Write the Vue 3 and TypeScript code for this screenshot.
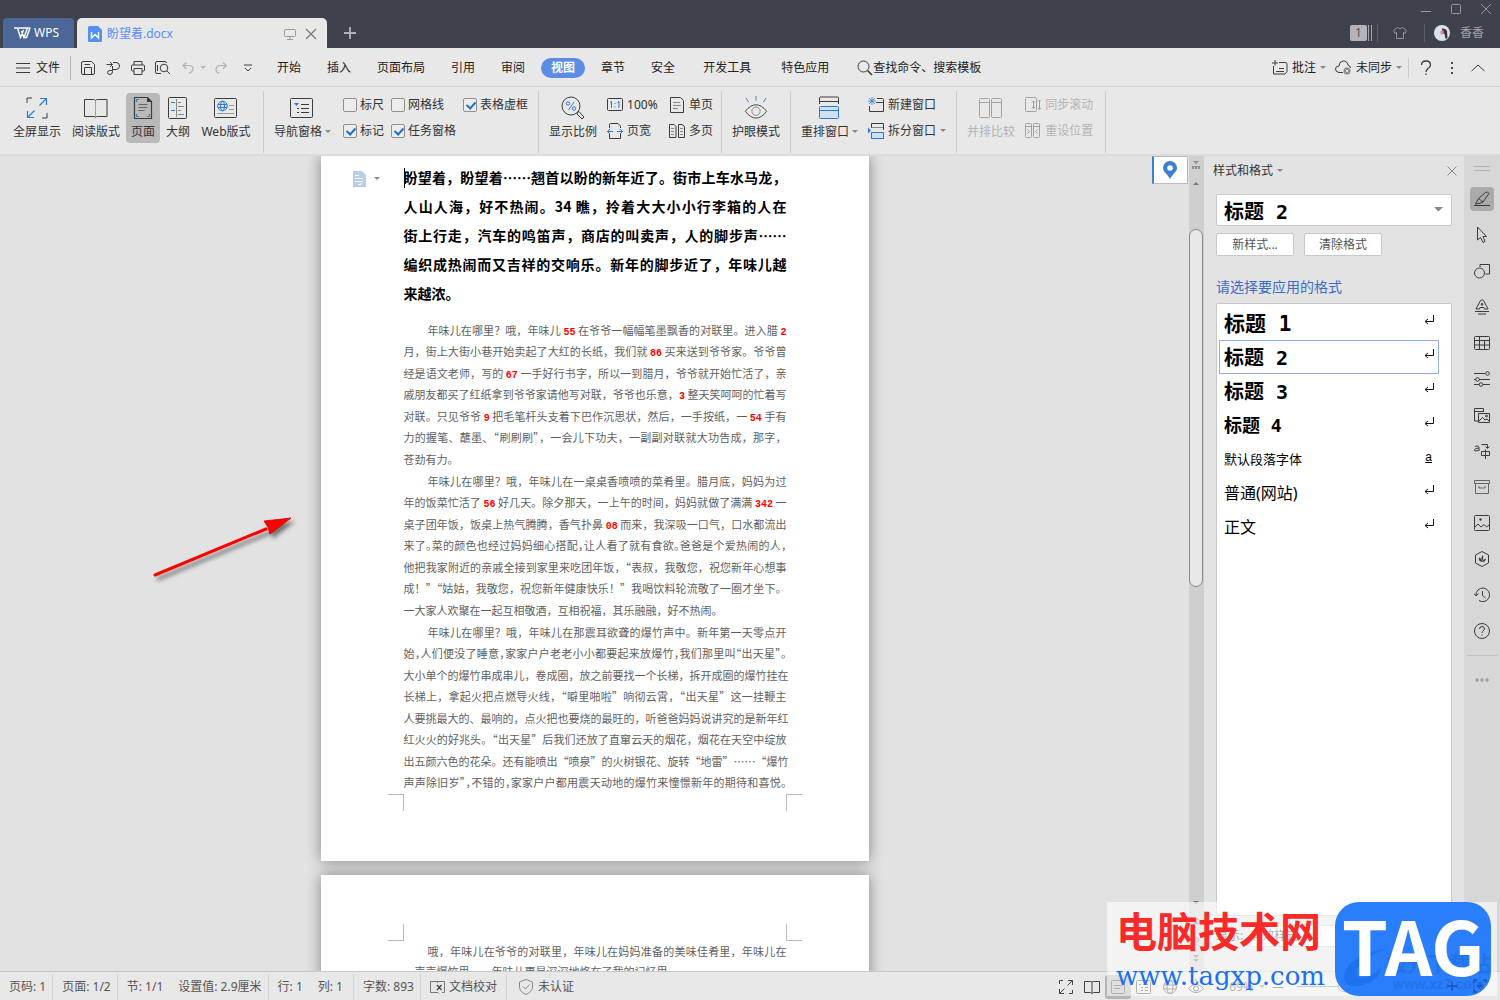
<script setup lang="ts">
import { h, ref } from 'vue'

type Glyph = { w: number; h: number; d: string }

const K = '#3c3c3c'
const B = '#2a7bd0'
const G = '#a2a2a2'
const box = (x: number, y: number, w: number, hh: number, c = K, r = 1) =>
  `<rect x="${x}" y="${y}" width="${w}" height="${hh}" rx="${r}" stroke="${c}"/>`
const p = (d: string, c = K, extra = '') => `<path d="${d}" stroke="${c}" ${extra}/>`

const glyphs: Record<string, Glyph> = {
  logo: { w: 17, h: 12, d: p('M0 1H3.500L6.500 10.500 9.500 3M4.500 1H13.500L10 10.500 7.500 4M16.500 1H13.500M16 1L12.500 10.500H10', '#fff', 'stroke-width="1.500"') },
  doc: { w: 14, h: 16, d: '<path d="M1.500 0H10L14 4V14.500Q14 16 12.500 16H1.500Q0 16 0 14.500V1.500Q0 0 1.500 0Z" fill="#568ff3"/>' + p('M3.500 6V12L7 8.500 10.500 12V6', '#fff', 'stroke-width="1.4"') },
  screen: { w: 12, h: 12, d: box(0.5, 1.5, 11, 7, '#999') + p('M6 8.500V11.500M3 11.500H9', '#999') },
  close: { w: 12, h: 12, d: p('M1 1L11 11M11 1L1 11', '#777', 'stroke-width="1.2"') },
  plus: { w: 14, h: 14, d: p('M7 1V13M1 7H13', '#b0b1b7', 'stroke-width="1.8"') },
  min: { w: 12, h: 12, d: p('M1 8.500H11', '#9899a0') },
  max: { w: 12, h: 12, d: box(1.5, 1.5, 9, 9, '#9899a0') },
  shut: { w: 12, h: 12, d: p('M1 1L11 11M11 1L1 11', '#9899a0') },
  bars: { w: 4, h: 16, d: p('M.5 0V16M3.500 0V16', '#a5a6ad') },
  shirt: { w: 14, h: 14, d: p('M4.500 1.500Q7 4 9.500 1.500L13.500 4.500 12 7.500 10.500 6.500V12.500H3.500V6.500L2 7.500.5 4.500Z', '#9394a0') },
  face: { w: 16, h: 16, d: '<circle cx="8" cy="8" r="8" fill="#dbe3ea"/><path d="M8 3.500Q12 3 13 6L13.500 13 11.500 14 10.500 9 8 7.500Z" fill="#3a2f37"/><path d="M6 6.500L9.500 5 10 8.500 7.500 10Z" fill="#c78f8e"/>' },
  menu: { w: 14, h: 12, d: p('M0 1.500H14M0 6H14M0 10.500H14') },
  save: { w: 14, h: 14, d: p('M.5 2Q.5.5 2 .5H10.500L13.500 3.500V12Q13.500 13.500 12 13.500H2Q.5 13.500.5 12ZM3.500 13V6.500H10.500V13M3.500 3.500H9') },
  reload: { w: 14, h: 14, d: p('M.5 3.500H6M4 1L6.500 3.500 4 6M7 1.500H10Q13.500 1.500 13.500 5T10 8.500H6.500M6.500 5V10.500Q6.500 13.500 4 13.500T1.500 11.500 4 9.500H6') },
  print: { w: 14, h: 14, d: p('M3 4V.5H11V4M3 10H1.500Q.5 10 .5 9V5Q.5 4 1.500 4H12.500Q13.500 4 13.500 5V9Q13.500 10 12.500 10H11M3 7.500H11V13.500H3Z') },
  preview: { w: 16, h: 14, d: p('M6 12.500H2Q.5 12.500.5 11V2Q.5.5 2 .5H10Q11.500.5 11.500 2M12 10L15 13M2.500 4V10') + '<circle cx="9" cy="7" r="3.8" stroke="#3c3c3c"/>' },
  undo: { w: 12, h: 12, d: p('M1 3.500H7.500Q11.500 4 11 7T7 11.500M4.500.5L1 3.500 4.500 7', '#b0b0b0', 'stroke-width="1.2"') },
  redo: { w: 12, h: 12, d: p('M11 3.500H5Q1 4 1 7.500T4.500 11M8 .5L11.500 3.500 8 7', '#b0b0b0', 'stroke-width="1.2"') },
  more: { w: 8, h: 8, d: p('M0 1H8M1 4L4 7 7 4') },
  caret: { w: 6, h: 4, d: '<path d="M0 0H6L3 3Z" fill="#888"/>' },
  find: { w: 16, h: 16, d: '<circle cx="6.500" cy="6.500" r="5.500" stroke="#3c3c3c"/>' + p('M10.500 10.500L15 15', K, 'stroke-width="1.6"') },
  note: { w: 16, h: 15, d: p('M7 2.500H13Q15 2.500 15 4V11.500L13 14H1.500V6M3 0V5.500M0 3H6M4 11.500H12M7 8.500H12') },
  cloud: { w: 17, h: 15, d: p('M8 12.500H4Q.5 12 .5 9T4 6Q4 1.500 8 1 12 .5 13 5 15.500 6 15.500 8') + '<circle cx="12" cy="11" r="3.5" fill="#888"/><path d="M10.500 9.500L13.500 12.500M13.500 9.500L10.500 12.500" stroke="#fff" stroke-width=".8"/>' },
  help: { w: 12, h: 16, d: p('M1.500 5Q1.500 1 6 1T10.500 5Q10.500 7 8 8.500 6 10 6 12M6 13.500V15', K, 'stroke-width="1.3"') },
  dots: { w: 4, h: 14, d: '<path d="M1 1h2v2H1zM1 6h2v2H1zM1 11h2v2H1z" fill="#444"/>' },
  up: { w: 14, h: 8, d: p('M.5 7L7 1 13.500 7') },
  full: { w: 22, h: 22, d: p('M1 6V1H6M16 21H21V16', K) + p('M14 1.500H20.500V8M20.500 1.500L13.500 8.500M1.500 14V20.500H8M1.500 20.500L8.500 13.500', B, 'stroke-width="1.2"') },
  read: { w: 24, h: 22, d: p('M11.500 3.500Q11 2.500 9.500 2.500H.5V19.500H10Q11.500 19.500 11.500 20.500 12 19.500 13.500 19.500H23V2.500H13.500Q12 2.500 11.500 3.500') + p('M11.500 4V19', G) },
  page: { w: 20, h: 22, d: p('M1.500.5H14.500L18.500 4.500V21.500H1.500Z', K, 'stroke-width="1.2"') + '<path d="M14 0V5H19Z" fill="#3c3c3c"/>' + p('M5.500 7.500H14.500M5.500 10.500H14.500M5.500 13.500H11.500', '#666') + p('M3.500 5V2.500H6M3.500 17V19.500H6M16.500 17V19.500H14', B) },
  outline: { w: 20, h: 22, d: box(0.5, 0.5, 18, 21) + p('M3 5.500H7M3 13.500H7', B) + p('M8.500 2V20M10 5.500H13M10 9.500H16M10 13.500H13M10 17.500H16', '#888') },
  web: { w: 24, h: 22, d: box(0.5, 1.5, 22, 19) + p('M15 8.500H20M15 12.500H20M3 16.500H20', '#999') + `<circle cx="8.500" cy="9" r="4.800" stroke="${B}"/><ellipse cx="8.500" cy="9" rx="2" ry="4.800" stroke="${B}"/>` + p('M4 7.500H13M4 10.500H13', B) },
  nav: { w: 26, h: 22, d: box(0.5, 1.5, 22, 19) + p('M11 7.500H19M7 11.500H9M11 11.500H19M7 15.500H9M11 15.500H19') + `<path d="M4 6H9L6.500 9Z" fill="${B}"/>` },
  zoom: { w: 24, h: 24, d: '<circle cx="10" cy="10" r="9" stroke="#3c3c3c"/>' + p('M16.500 16.500L18 15.500 23 21 21 23 16 18Z') + p('M13 6L7.500 14', B) + `<circle cx="7" cy="7.500" r="1.700" stroke="${B}"/><circle cx="13" cy="12.500" r="1.700" stroke="${B}"/>` },
  one: { w: 16, h: 14, d: box(0.5, 0.5, 15, 12) + p('M3 4.500L4.500 3.500V10M10.500 4.500L12 3.500V10M8 5V6M8 8.500V9.500', B) },
  wide: { w: 16, h: 16, d: p('M2.500 5V1.500Q2.500.5 3.500.5H11L13.500 3V5M2.500 11V15.500H13.500V11') + p('M6 8.500H0M10 8.500H16M3 6L.5 8.500 3 11M13 6L15.500 8.500 13 11', B) },
  single: { w: 14, h: 16, d: p('M.5.5H10.500L13.500 3.500V15.500H.5Z') + p('M3 5.500H10M3 8.500H11M3 11.500H8', '#888') },
  multi: { w: 16, h: 16, d: p('M.5 1.500H5L7 3.500V14.500H.5ZM9.500 1.500H13L15.500 3.500V14.500H9.500Z') + p('M2 5.500H5M2 8.500H5M2 11.500H5M11 5.500H14M11 8.500H14M11 11.500H14', '#888') },
  eye: { w: 26, h: 26, d: p('M1.500 16.500Q7 9.500 13 9.500T24.500 16.500Q19 24 13 24T1.500 16.500Z') + `<circle cx="13" cy="16.500" r="4.500" stroke="#888"/>` + p('M13 0V5M2 2L5 6.500M24 2L21 6.500', B) },
  arrange: { w: 24, h: 24, d: p('M1.500 8V2Q1.500 1 2.500 1H19.500Q20.500 1 20.500 2V8M1.500 5.500H20.500') + `<rect x="1.500" y="10.500" width="19" height="12" rx="1" stroke="${B}" fill="#cfe0f1"/>` + p('M1 14.500H21', B) },
  fresh: { w: 16, h: 16, d: p('M9 1.500H14.500Q15.500 1.500 15.500 2.500V14.500H1.500V9M8 5.500H15') + p('M4 0V8M0 4H8M1 1L7 7M7 1L1 7', B, 'stroke-width=".8"') },
  split: { w: 16, h: 16, d: p('M3.500 5V.5H15.500V7') + p('M3.500 4.500H15', '#888') + `<rect x="3.500" y="9.500" width="12" height="6" stroke="${B}" fill="#cfe0f1"/><path d="M0 4.500V10.500L3 7.500Z" fill="${B}"/>` },
  side: { w: 24, h: 22, d: box(0.5, 1.5, 10, 19, G) + box(12.5, 1.5, 10, 19, G) + p('M0 5.500H11M12 5.500H23', G) },
  sync: { w: 16, h: 16, d: box(0.5, 0.5, 11, 14, G) + p('M8.500 4V11.500M7 5.500L8.500 4 10 5.500M7 10L8.500 11.500 10 10M14.500 3V12.500M13 4.500L14.500 3 16 4.500M13 11L14.500 12.500 16 11', G) },
  reset: { w: 16, h: 16, d: box(0.5, 0.5, 6, 14, G) + box(8.5, 0.5, 6, 14, G) + p('M1 3.500H6M9 3.500H14M2.500 6.500L4.500 8.500 2.500 10.500M12.500 6.500L10.500 8.500 12.500 10.500', G) },
  para: { w: 14, h: 16, d: '<path d="M0 0H9L13 4V16H0Z" fill="#b9cce8"/>' + p('M2 4.500H6M2 7.500H10M2 10.500H10M5 13.500H8V12', '#fff') },
  pin: { w: 14, h: 18, d: '<path d="M7 0A7 7 0 0 1 14 7C14 11 9 13.500 7 18 5 13.500 0 11 0 7A7 7 0 0 1 7 0Z" fill="#3f80d4"/><circle cx="7" cy="7" r="2.800" fill="#fff"/>' },
  ruler: { w: 10, h: 10, d: '<path d="M2 1H8L5 4ZM1 6H9V9H7V7H6V9H4V7H3V9H1Z" fill="#909090"/>' },
  upTri: { w: 6, h: 4, d: '<path d="M0 3H6L3 0Z" fill="#777"/>' },
  downTri: { w: 6, h: 4, d: '<path d="M0 0H6L3 3Z" fill="#777"/>' },
  prevPg: { w: 6, h: 8, d: '<path d="M0 3H6L3 0ZM0 7H6L3 4Z" fill="#777"/>' },
  nextPg: { w: 6, h: 8, d: '<path d="M0 0H6L3 3ZM0 4H6L3 7Z" fill="#777"/>' },
  spot: { w: 6, h: 6, d: '<circle cx="3" cy="3" r="2.500" stroke="#777"/>' },
  enter: { w: 10, h: 10, d: p('M9.500 0V6.500H1.500M4 4L1 6.500 4 9', '#111') },
  shutPanel: { w: 10, h: 10, d: p('M.5.5L9.500 9.500M9.500.5L.5 9.500', '#888') },
  grip: { w: 16, h: 6, d: p('M0 .5H16M0 4.500H16', '#b0b0b0') },
  pen: { w: 16, h: 16, d: p('M0 14.500H16M1.500 13L4.500 7.500 11.500 1.500Q14 0 15 2.500L9 11Q5 13 1.500 13ZM4.500 7.500L9 11', K) },
  cursor: { w: 16, h: 18, d: p('M3.500 1V14L6.500 11.500 9 16.500 11 15.500 9 10.500H12.500Z') },
  shapes: { w: 16, h: 16, d: '<circle cx="5.500" cy="10" r="5" stroke="#3c3c3c"/>' + p('M6 4V1.500H15.500V11H11.500') },
  art: { w: 16, h: 16, d: p('M2 10L6.500 1.500Q8 0 9.500 1.500L14 10H10.500L10 8.500H6L5.500 10ZM7 6H9L8 4ZM1 12.500H15M4 15H12') },
  table: { w: 16, h: 14, d: box(0.5, 0.5, 15, 13) + p('M0 4.500H16M0 9H16M5.500 0V14M10.500 4V14') },
  sliders: { w: 16, h: 16, d: p('M0 2.500H11M0 8.500H2M5 8.500H16M0 13.500H5M9 13.500H16') + '<circle cx="13.500" cy="2.500" r="1.800" stroke="#3c3c3c"/><circle cx="3.500" cy="8.500" r="1.800" stroke="#3c3c3c"/><circle cx="7" cy="13.500" r="1.800" stroke="#3c3c3c"/>' },
  gallery: { w: 16, h: 16, d: p('M4 14H.5V1.500H9.500V5M.5 4.500H9M4.500 6.500H15.500V15.500H4.500ZM5 14L8.500 10.500 11 13 13 12 15 14') + '<circle cx="12.500" cy="9" r="1" stroke="#3c3c3c"/>' },
  translate: { w: 16, h: 16, d: p('M1 4Q1 3 3 3T5 4.500V8M5 5Q.5 5 .5 7T5 7M7.500 1.500H13.500V5M11.500 3.500L13.500 5.500 15.500 3.500M7.500 8.500H15.500V12.500H7.500ZM11.500 6.500V16') },
  archive: { w: 16, h: 14, d: p('M.5.5H15.500V3.500H.5ZM1.500 3.500V13.500H14.500V3.500M5 6V8H11V6', '#666') },
  image: { w: 16, h: 16, d: box(0.5, 0.5, 15, 15) + p('M1 12L4 9 7 12 10 9.500 12.500 12 15 10') + '<circle cx="6.500" cy="4.500" r="1.200" fill="#3c3c3c"/>' },
  leaf: { w: 16, h: 16, d: p('M8 .5L14.500 4V12L8 15.500 1.500 12V4Z') + '<path d="M8 11Q4 10 5 6.500 8 8 8 11Q6.500 6 9 4 10 7 8 11Q9 8 12 7.500 11.500 11 8 11Z" fill="#3c3c3c"/>' },
  history: { w: 16, h: 16, d: p('M2 8.500A6.800 6.800 0 1 1 5 13.500M0 6.500L2 9 4.500 6.500M8.500 4V8.500L11.500 11') },
  about: { w: 16, h: 16, d: '<circle cx="8" cy="8" r="7.500" stroke="#3c3c3c"/>' + p('M5.500 6Q5.500 3.500 8 3.500T10.500 6Q10.500 7 9 8 8.500 8 8 10M8 11.500V12.500') },
  ellipsis: { w: 14, h: 4, d: '<circle cx="2" cy="2" r="1.200" stroke="#888"/><circle cx="7" cy="2" r="1.200" stroke="#888"/><circle cx="12" cy="2" r="1.200" stroke="#888"/>' },
  proof: { w: 15, h: 14, d: p('M8 1.500H.5V12.500H8L9 13.500M7.500 1.500V3M7.500 1.500H14.500V12.500H12', '#777') + p('M7 5L11.500 10M11.500 5L7 10', '#444', 'stroke-width="1.300"') },
  shield: { w: 14, h: 16, d: p('M7 .5L13.500 3V8Q13 13 7 15.500 1 13 .5 8V3ZM4 7.500L6.500 10 10.500 5.500', '#888') },
  fullS: { w: 16, h: 16, d: p('M1.500 5V1.500H5M11 14.500H14.500V11M10 1.500H14.500V6M14.500 1.500L9.500 6.500M1.500 10V14.500H6M1.500 14.500L6.500 9.500', '#444') },
  readS: { w: 16, h: 14, d: p('M8 2L6.500 1.500H.5V12.500H6.500L8 13.500 9.500 12.500H15.500V1.500H9.500ZM8 2V13', '#444') },
  pageS: { w: 14, h: 16, d: box(0.5, 1.5, 13, 13, '#444') + p('M3 6.500H11M3 9.500H9', '#444') },
  outS: { w: 16, h: 14, d: box(0.5, 0.5, 14, 13, '#444') + p('M3 4.500H5M7 4.500H12M5 7.500H7M9 7.500H12M5 10.500H7M9 10.500H12', '#444') },
  webS: { w: 16, h: 16, d: '<circle cx="8" cy="8" r="6.500" stroke="#444"/><ellipse cx="8" cy="8" rx="3" ry="6.500" stroke="#444"/>' + p('M2 6H14M2 10H14', '#444') },
  eyeS: { w: 16, h: 16, d: p('M.5 9.500Q8 1 15.500 9.500 8 18 .5 9.500M8 0V3M2 1.500L3.500 4M14 1.500L12.500 4', '#444') + '<circle cx="8" cy="9.500" r="2.500" stroke="#444"/>' },
  plusS: { w: 12, h: 12, d: p('M6 1V11M1 6H11', '#1d56b0', 'stroke-width="1.400"') },
  fitS: { w: 14, h: 14, d: p('M1 4V1H4M10 1H13V4M13 10V13H10M4 13H1V10M7 4V10M4 7H10', '#1d56b0', 'stroke-width="1.400"') },
  swirl: { w: 50, h: 42, d: '<path d="M48 0Q10 6 4 24 0 40 18 38 38 34 40 20 30 30 20 30 12 28 18 18 28 6 48 0Z" fill="#1f72ee"/>' },
}

const Icon = (props: { n: string }) => {
  const g = glyphs[props.n]
  return h('svg', {
    width: g.w, height: g.h, viewBox: `0 0 ${g.w} ${g.h}`,
    fill: 'none', 'aria-hidden': 'true', innerHTML: g.d,
  })
}
Icon.props = ['n']

const menuTabs = ['开始', '插入', '页面布局', '引用', '审阅', '视图', '章节', '安全', '开发工具', '特色应用']
const quick = ['save', 'reload', 'print', 'preview']
const checks = ref([
  { t: '标尺', on: false }, { t: '网格线', on: false }, { t: '表格虚框', on: true },
  { t: '标记', on: true }, { t: '任务窗格', on: true },
])

const heading = [
  '盼望着，盼望着……翘首以盼的新年近了。街市上车水马龙，',
  '人山人海，好不热闹。34 瞧，拎着大大小小行李箱的人在',
  '街上行走，汽车的鸣笛声，商店的叫卖声，人的脚步声……',
  '编织成热闹而又吉祥的交响乐。新年的脚步近了，年味儿越',
  '来越浓。',
]
const paragraphs = [
  [
    '年味儿在哪里？哦，年味儿 55 在爷爷一幅幅笔墨飘香的对联里。进入腊 2',
    '月，街上大街小巷开始卖起了大红的长纸，我们就 86 买来送到爷爷家。爷爷曾',
    '经是语文老师，写的 67 一手好行书字，所以一到腊月，爷爷就开始忙活了，亲',
    '戚朋友都买了红纸拿到爷爷家请他写对联，爷爷也乐意，3 整天笑呵呵的忙着写',
    '对联。只见爷爷 9 把毛笔杆头支着下巴作沉思状，然后，一手按纸，一 54 手有',
    '力的握笔、蘸墨、“刷刷刷”，一会儿下功夫，一副副对联就大功告成，那字，',
    '苍劲有力。',
  ],
  [
    '年味儿在哪里？哦，年味儿在一桌桌香喷喷的菜肴里。腊月底，妈妈为过',
    '年的饭菜忙活了 56 好几天。除夕那天，一上午的时间，妈妈就做了满满 342 一',
    '桌子团年饭，饭桌上热气腾腾，香气扑鼻 08 而来，我深吸一口气，口水都流出',
    '来了。菜的颜色也经过妈妈细心搭配，让人看了就有食欲。爸爸是个爱热闹的人，',
    '他把我家附近的亲戚全接到家里来吃团年饭，“表叔，我敬您，祝您新年心想事',
    '成！”“姑姑，我敬您，祝您新年健康快乐！”我喝饮料轮流敬了一圈才坐下。',
    '一大家人欢聚在一起互相敬酒，互相祝福，其乐融融，好不热闹。',
  ],
  [
    '年味儿在哪里？哦，年味儿在那震耳欲聋的爆竹声中。新年第一天零点开',
    '始，人们便没了睡意，家家户户老老小小都要起来放爆竹，我们那里叫“出天星”。',
    '大小单个的爆竹串成串儿，卷成圈，放之前要找一个长梯，拆开成圈的爆竹挂在',
    '长梯上，拿起火把点燃导火线，“噼里啪啦”响彻云霄，“出天星”这一挂鞭主',
    '人要挑最大的、最响的，点火把也要烧的最旺的，听爸爸妈妈说讲究的是新年红',
    '红火火的好兆头。“出天星”后我们还放了直窜云天的烟花，烟花在天空中绽放',
    '出五颜六色的花朵。还有能喷出“喷泉”的火树银花、旋转“地雷”……“爆竹',
    '声声除旧岁”，不错的，家家户户都用震天动地的爆竹来憧憬新年的期待和喜悦。',
  ],
]
const parts = (line: string) => line.split(/(\d+)/).filter(Boolean)
const isNumber = (s: string) => /^\d+$/.test(s)
const isTight = (line: string) => line.length > 35 && !/\d/.test(line)

const styles = [
  { t: '标题 1', c: 'h1', m: 'enter' }, { t: '标题 2', c: 'h2', m: 'enter' },
  { t: '标题 3', c: 'h2', m: 'enter' }, { t: '标题 4', c: 'h4', m: 'enter' },
  { t: '默认段落字体', c: 'small', m: 'a' }, { t: '普通(网站)', c: 'plain', m: 'enter' },
  { t: '正文', c: 'plain', m: 'enter' },
]
const current = ref('标题 2')
const rail = ['pen', 'cursor', 'shapes', 'art', 'table', 'sliders', 'gallery', 'translate', 'archive', 'image', 'leaf', 'history', 'about']
const status = [['页码: 1'], ['页面: 1/2'], ['节: 1/1', '设置值: 2.9厘米'], ['行: 1', '列: 1'], ['字数: 893']]
const zoomLevel = ref(33)
</script>

<template>
  <div class="app">
    <header class="title">
      <button class="wps"><Icon n="logo" />WPS</button>
      <div class="filetab">
        <Icon n="doc" /><span class="fname">盼望着.docx</span>
        <button aria-label="窗口"><Icon n="screen" /></button>
        <button aria-label="关闭文档"><Icon n="close" /></button>
      </div>
      <button class="add" aria-label="新建"><Icon n="plus" /></button>
      <div class="corner">
        <div class="wins">
          <button aria-label="最小化"><Icon n="min" /></button>
          <button aria-label="最大化"><Icon n="max" /></button>
          <button aria-label="关闭"><Icon n="shut" /></button>
        </div>
        <div class="user">
          <span class="badge">1</span><Icon n="bars" /><i class="bar"></i>
          <Icon n="shirt" class="shirt" /><i class="bar"></i>
          <Icon n="face" class="face" /><span>香香</span>
        </div>
      </div>
    </header>

    <nav class="menu">
      <button class="file"><Icon n="menu" />文件</button>
      <div class="quick">
        <button v-for="q in quick" :key="q" :aria-label="q"><Icon :n="q" /></button>
        <button aria-label="撤销"><Icon n="undo" /></button>
        <Icon n="caret" class="pale" />
        <button aria-label="恢复"><Icon n="redo" /></button>
        <button aria-label="更多"><Icon n="more" /></button>
      </div>
      <div class="tabs">
        <button v-for="t in menuTabs" :key="t" :class="{ on: t === '视图', long: t === '特色应用' }">{{ t }}</button>
      </div>
      <button class="search"><Icon n="find" />查找命令、搜索模板</button>
      <div class="tools">
        <button class="note"><Icon n="note" />批注<Icon n="caret" /></button>
        <button class="cloud"><Icon n="cloud" />未同步<Icon n="caret" /></button>
        <button class="q" aria-label="帮助"><Icon n="help" /></button>
        <button class="q" aria-label="选项"><Icon n="dots" /></button>
        <button class="q" aria-label="收起"><Icon n="up" /></button>
      </div>
    </nav>

    <section class="ribbon">
      <div class="group views">
        <button class="big w58"><Icon n="full" />全屏显示</button>
        <button class="big w58"><Icon n="read" />阅读版式</button>
        <button class="big w34 on"><Icon n="page" />页面</button>
        <button class="big w34"><Icon n="outline" />大纲</button>
        <button class="big w60"><Icon n="web" />Web版式</button>
      </div>
      <div class="group">
        <button class="big"><Icon n="nav" /><span class="drop">导航窗格<Icon n="caret" /></span></button>
        <div class="checks">
          <label v-for="c in checks" :key="c.t"><input v-model="c.on" type="checkbox" />{{ c.t }}</label>
        </div>
      </div>
      <div class="group snug">
        <button class="big"><Icon n="zoom" />显示比例</button>
        <div class="stack s52">
          <button><Icon n="one" />100%</button>
          <button><Icon n="wide" />页宽</button>
        </div>
        <div class="stack">
          <button><Icon n="single" />单页</button>
          <button><Icon n="multi" />多页</button>
        </div>
      </div>
      <div class="group">
        <button class="big"><Icon n="eye" />护眼模式</button>
      </div>
      <div class="group">
        <button class="big"><Icon n="arrange" /><span class="drop">重排窗口<Icon n="caret" /></span></button>
        <div class="stack">
          <button><Icon n="fresh" />新建窗口</button>
          <button><Icon n="split" />拆分窗口<Icon n="caret" /></button>
        </div>
      </div>
      <div class="group last">
        <button class="big" disabled><Icon n="side" />并排比较</button>
        <div class="stack">
          <button disabled><Icon n="sync" />同步滚动</button>
          <button disabled><Icon n="reset" />重设位置</button>
        </div>
      </div>
    </section>

    <main class="work">
      <div class="canvas">
        <article class="sheet first">
          <span class="mark"><Icon n="para" /><Icon n="caret" /></span>
          <h1><span v-for="(l, i) in heading" :key="i" class="line" :class="{ end: i === 4 }">{{ l }}</span></h1>
          <p v-for="(para, i) in paragraphs" :key="i">
            <span
              v-for="(l, j) in para" :key="j" class="line"
              :class="{ indent: j === 0, end: j === para.length - 1 && i < 2, tight: isTight(l) }"
            ><template v-for="(s, k) in parts(l)" :key="k"><b v-if="isNumber(s)">{{ s }}</b><template v-else>{{ s }}</template></template></span>
          </p>
          <div class="crops bottom"><i></i><i></i></div>
        </article>
        <article class="sheet second">
          <div class="crops top"><i></i><i></i></div>
          <p>
            <span class="line indent">哦，年味儿在爷爷的对联里，年味儿在妈妈准备的美味佳肴里，年味儿在</span>
            <span class="line end">一声声爆竹里，一年味儿更是深深地烙在了我的记忆里</span>
          </p>
        </article>
        <button class="pin" aria-label="定位"><Icon n="pin" /></button>
        <svg class="arrow" width="150" height="76" viewBox="0 0 150 76" fill="none" aria-hidden="true">
          <path d="M6 65L117 19" stroke="#f00" stroke-width="3" stroke-linecap="round" />
          <path d="M142 8L115 11 119 17 121 24Z" fill="#f00" stroke="#c00" stroke-width=".8" />
        </svg>
      </div>
      <div class="scroll">
        <Icon n="ruler" /><Icon n="upTri" /><i class="thumb"></i>
        <Icon n="downTri" class="down" /><Icon n="prevPg" /><Icon n="spot" /><Icon n="nextPg" />
      </div>
      <aside class="panel">
        <div class="phead"><span>样式和格式</span><Icon n="caret" /><button aria-label="关闭面板"><Icon n="shutPanel" /></button></div>
        <div class="pick h2">
          <select v-model="current" aria-label="样式"><option v-for="s in styles" :key="s.t">{{ s.t }}</option></select>
          <Icon n="caret" />
        </div>
        <div class="pbtns"><button>新样式...</button><button>清除格式</button></div>
        <h2>请选择要应用的格式</h2>
        <ul class="list">
          <li v-for="s in styles" :key="s.t" :class="[s.c, { on: s.t === current }]" @click="current = s.t">
            <span>{{ s.t }}</span><u v-if="s.m === 'a'">a</u><Icon v-else n="enter" />
          </li>
        </ul>
        <div class="show">
          <label for="show">显示:</label>
          <select id="show"><option>有效样式</option></select>
        </div>
      </aside>
      <nav class="rail">
        <Icon n="grip" class="grip" />
        <button v-for="r in rail" :key="r" :aria-label="r" :class="{ on: r === 'pen' }"><Icon :n="r" /></button>
        <i></i>
        <button aria-label="更多工具"><Icon n="ellipsis" /></button>
      </nav>
    </main>

    <footer class="status">
      <div v-for="(s, i) in status" :key="i" class="cell" :class="{ roomy: i === 3 }"><span v-for="t in s" :key="t">{{ t }}</span></div>
      <div class="cell"><Icon n="proof" />文档校对</div>
      <div class="cell cert"><Icon n="shield" />未认证</div>
      <div class="modes">
        <button aria-label="全屏"><Icon n="fullS" /></button>
        <button aria-label="阅读"><Icon n="readS" /></button>
        <button aria-label="页面" class="on"><Icon n="pageS" /></button>
        <button aria-label="大纲"><Icon n="outS" /></button>
        <button aria-label="网页"><Icon n="webS" /></button>
        <button aria-label="护眼"><Icon n="eyeS" /></button>
        <span class="pct">69%</span><Icon n="caret" />
        <button aria-label="缩小">—</button>
        <input v-model="zoomLevel" type="range" min="0" max="100" aria-label="缩放" />
      </div>
    </footer>

    <div class="stamp">
      <div class="words"><strong>电脑技术网</strong><em>www.tagxp.com</em></div>
      <div class="tag">
        <span class="big-tag">TAG</span>
        <Icon n="swirl" class="swirl" />
        <span class="ghost">极光下载站<small>www.xz7.com</small></span>
        <span class="keys"><Icon n="plusS" /><Icon n="fitS" /></span>
      </div>
    </div>
  </div>
</template>

<style>
body { background: #e8e8e8; }
</style>

<style scoped>
* { box-sizing: border-box; }
.app {
  position: relative; display: flex; flex-direction: column; height: 100vh; overflow: hidden;
  background: #e8e8e8; color: #333; font: 12px/16px "Noto Sans", "Noto Sans CJK SC", sans-serif;
}
button { margin: 0; padding: 0; border: 0; background: none; color: inherit; font: inherit; white-space: nowrap; }
svg { flex: none; display: block; }

.title { display: flex; align-items: flex-end; height: 48px; padding-left: 3px; background: #3f414d; }
.wps { display: flex; align-items: center; justify-content: center; gap: 3px; width: 71px; height: 30px; padding-right: 4px; border-radius: 4px 4px 0 0; background: #4a6798; color: #fff; }
.filetab { display: flex; align-items: center; width: 250px; height: 30px; margin-left: 3px; padding: 1px 10px 0 11px; border-radius: 5px 5px 0 0; background: #e8e8e8; color: #568ff3; }
.fname { flex: 1; margin-left: 5px; }
.filetab button { margin-left: 9px; }
.add { margin: 0 0 8px 16px; }
.corner { display: flex; flex-direction: column; align-items: flex-end; align-self: stretch; margin-left: auto; }
.wins { display: flex; gap: 18px; height: 25px; padding: 3px 8px 0 0; }
.wins button { height: 12px; }
.user { display: flex; align-items: center; height: 16px; padding-right: 16px; color: #9fa0a8; }
.badge { width: 17px; margin-right: 1px; border-radius: 2px; background: #b3b4b9; color: #5b5144; text-align: center; }
.bar { width: 1px; height: 18px; margin-left: 5px; background: #5c5e69; }
.shirt { margin: 0 12px 0 15px; }
.face { margin: 0 10px 0 9px; }

.menu { display: flex; align-items: center; height: 39px; padding: 1px 15px 0 0; border-bottom: 1px solid #d4d4d4; color: #222; }
.file { display: flex; align-items: center; gap: 6px; width: 71px; height: 24px; padding-left: 16px; border-right: 1px solid #bbb; }
.quick { display: flex; align-items: center; width: 193px; padding-left: 4px; }
.quick button { display: flex; justify-content: center; width: 25px; }
.quick button:last-child { margin-left: 2px; }
.quick .pale + button { margin-left: 2px; }
.pale { opacity: .5; }
.tabs { display: flex; align-items: center; }
.tabs button { height: 20px; margin: 0; padding: 0 13px; border-radius: 10px; line-height: 20px; }
.tabs .on { margin: 0 3px; padding: 0 10px; background: #5b8de6; color: #fff; font-weight: 700; }
.tabs button:nth-child(9) { margin-left: 2px; }
.tabs .long { margin-left: 4px; }
.search { display: flex; align-items: center; margin-left: 15px; }
.tools { display: flex; align-items: center; margin-left: auto; }
.tools > button { display: flex; align-items: center; justify-content: center; }
.note { gap: 4px; }
.cloud { gap: 4px; height: 20px; margin-left: 9px; padding-right: 6px; border-right: 1px solid #ccc; }
.q { width: 26px; }
.q:nth-child(3) { margin-left: 4px; }
.q:last-child { width: 14px; margin-left: 6px; }

.ribbon { display: flex; height: 69px; padding-top: 4px; border-bottom: 2px solid #dcdcdc; }
.group { display: flex; align-items: flex-start; height: 62px; padding: 1px 10px 0; border-right: 1px solid #ccc; }
.group.snug { padding-right: 8px; }
.views { gap: 1px; padding: 1px 7px 0 8px; }
.big { display: flex; flex-direction: column; align-items: center; height: 50px; margin-top: 1px; border-radius: 4px; }
.big > svg { height: 24px; margin: 3px 0 4px; }
.w58 { width: 58px; }
.w34 { width: 34px; }
.w60 { width: 60px; }
.big.on { background: #b9b9b9; }
.drop { display: flex; align-items: center; gap: 3px; }
.checks { display: grid; grid-template-columns: 48px 72px auto; grid-auto-rows: 26px; align-items: center; margin-left: 12px; }
.checks label { display: flex; align-items: center; gap: 3px; white-space: nowrap; }
.checks input { flex: none; width: 14px; height: 14px; margin: 0; border: 1px solid #909090; border-radius: 2px; appearance: none; background: #ececec; }
.checks input:checked::after { content: ""; display: block; width: 4px; height: 7px; margin: 1px 4px; border: solid #2671be; border-width: 0 2px 2px 0; transform: rotate(42deg); }
.stack { margin-left: 10px; }
.stack button { display: flex; align-items: center; gap: 4px; height: 26px; }
.s52 { width: 52px; }
.stack button > svg:first-child { width: 16px; }
.last { padding-right: 12px; }
button:disabled { color: #b4b4b4; }

.work { display: flex; flex: 1; min-height: 0; }
.canvas { position: relative; flex: 1; display: flex; flex-direction: column; align-items: center; gap: 14px; overflow: hidden; background: #e2e2e2; }
.sheet { position: relative; flex: none; width: 548px; padding: 0 82px 0 83px; background: #fff; box-shadow: 0 0 14px rgb(0 0 0 / 42%); }
.first { padding-top: 7px; padding-bottom: 50px; }
.mark { position: absolute; top: 15px; left: 32px; display: flex; align-items: center; gap: 7px; }
.sheet h1 { margin: 0 0 11px; color: #000; font: 700 14px/29px "Noto Sans CJK SC", sans-serif; }
.sheet h1 .line:first-child { background: linear-gradient(#000, #000) 0 50% / 1px 20px no-repeat; }
.sheet p { margin: 0; color: #5f5f5f; font: 11px/22px "Noto Sans CJK SC", sans-serif; }
.line { display: block; white-space: nowrap; text-align: justify; text-align-last: justify; }
p .line:nth-child(even) { line-height: 21px; }
.line.end { text-align-last: left; }
.line.indent { padding-left: 24px; }
.line.tight { font-feature-settings: "halt"; }
.line b { color: #f00; font: 700 10px/1px "Liberation Mono", monospace; }
.crops { display: flex; justify-content: space-between; height: 17px; margin: 0 -15px 0 -16px; }
.crops i { width: 16px; border: 0 solid #bbb; }
.bottom { margin-top: 1px; }
.bottom i { border-top-width: 1px; }
.top i { border-bottom-width: 1px; }
.crops i:first-child { border-right-width: 1px; }
.crops i:last-child { border-left-width: 1px; }
.second { padding-top: 49px; }
.second p { line-height: 20px; }
.pin { position: absolute; top: 0; right: 1px; display: grid; place-items: center; width: 36px; height: 28px; padding-right: 1px; border: 1px solid #bbb; border-left: 2px solid #3f80d4; background: #fff; }
.arrow { position: absolute; top: 354px; left: 149px; filter: drop-shadow(3px 4px 2px rgb(0 0 0 / 50%)); }

.scroll { display: flex; flex-direction: column; align-items: center; gap: 12px; width: 15px; padding: 4px 1px 8px 0; background: #cfcfcf; }
.thumb { flex: none; width: 14px; height: 358px; margin-top: 31px; border: 1px solid #8a8a8a; border-radius: 7px; background: #e8e8e8; }
.down { margin-top: auto; }

.panel { display: flex; flex-direction: column; width: 260px; padding: 7px 12px 24px; background: #e3e3e3; }
.phead { display: flex; align-items: center; gap: 4px; height: 16px; margin-left: -3px; }
.phead button { margin-left: auto; margin-right: -5px; }
.pick { display: flex; align-items: center; height: 32px; margin-top: 15px; padding-right: 8px; border: 1px solid #c8c8c8; border-radius: 2px; background: #fff; }
.pick select { flex: 1; height: 30px; padding: 3px 7px 0; border: 0; appearance: none; background: none; color: #000; font: inherit; }
.pick svg { width: 9px; height: 6px; }
.pbtns { display: flex; gap: 10px; margin-top: 7px; }
.pbtns button { width: 78px; height: 23px; border: 1px solid #c8c8c8; border-radius: 2px; background: #fff; color: #555; }
.panel h2 { margin: 21px 0 6px; color: #3c6dc5; font: 14px/20px "Noto Sans", "Noto Sans CJK SC", sans-serif; }
.list { flex: 1; margin: 0; padding: 2px 12px 0 2px; border: 1px solid #c8c8c8; border-radius: 2px; background: #fff; list-style: none; }
.list li { display: flex; align-items: center; justify-content: space-between; height: 34px; padding: 0 4px; border: 1px solid transparent; color: #000; }
.list li.on { border-color: #8fb0dd; }
.list li svg { margin: 0 0 6px; }
.list u { margin: 0 2px 4px; font: 12px/16px "Liberation Sans", sans-serif; }
.h1 { font: 700 21px/24px "DejaVu Sans Mono", "Noto Sans CJK SC", monospace; }
.h2 { font: 700 20px/24px "DejaVu Sans Mono", "Noto Sans CJK SC", monospace; }
.h4 { font: 700 18px/24px "DejaVu Sans Mono", "Noto Sans CJK SC", monospace; }
.h1 span, .h2 span, .h4 span { padding-top: 2px; }
.small { font-size: 13px; }
.plain { font-size: 16px; }
.show { display: flex; align-items: center; gap: 6px; margin-top: 9px; }
.show select { flex: 1; height: 22px; border: 1px solid #ccc; border-radius: 2px; appearance: none; background: #fff; color: #333; font: inherit; }

.rail { display: flex; flex-direction: column; align-items: center; gap: 12px; width: 36px; padding: 10px 1px 0 0; background: #d7d7d7; }
.grip { margin-bottom: 3px; }
.rail button { display: grid; place-items: center; width: 24px; height: 24px; border-radius: 4px; }
.rail .on { background: #aaa; }
.rail i { width: 30px; height: 1px; background: #c0c0c0; }

.status { display: flex; align-items: center; height: 29px; padding-top: 1px; border-top: 1px solid #c8c8c8; color: #555; }
.cell { display: flex; align-items: center; gap: 15px; height: 26px; padding: 0 6px 0 9px; border-right: 1px solid #d4d4d4; white-space: nowrap; }
.cell.roomy { padding-right: 10px; }
.cell:has(svg) { gap: 4px; padding-right: 9px; }
.cell.cert { gap: 5px; padding-left: 12px; border: 0; }
.modes { display: flex; align-items: center; margin-left: auto; padding-right: 63px; }
.modes button { display: grid; place-items: center; width: 26px; height: 24px; }
.modes .on { border-radius: 3px; background: #b4b4b4; }
.pct { margin: 0 6px 0 20px; }
.modes input { width: 136px; height: 12px; margin: 0 4px 0 6px; appearance: none; background: linear-gradient(#888, #888) 0 50% / 100% 1px no-repeat; }
.modes input::-webkit-slider-thumb { width: 11px; height: 11px; border: 1px solid #777; border-radius: 50%; appearance: none; background: #f0f0f0; }

.stamp { position: absolute; right: 3px; bottom: 4px; display: flex; width: 390px; height: 94px; background: rgb(255 255 255 / 58%); }
.words { display: flex; flex: 1; flex-direction: column; min-width: 0; padding-left: 9px; white-space: nowrap; }
.words strong { color: #f82a2a; font: 700 41px/54px "Noto Sans CJK SC", sans-serif; }
.words em { color: #1b70f2; font: 400 26px/40px "DejaVu Serif", serif; }
.tag { position: relative; flex: none; width: 156px; margin-right: 6px; overflow: hidden; border-radius: 24px; background: #2a7efc; text-align: center; }
.big-tag { position: relative; z-index: 1; color: #fff; font: 700 74px/84px "Noto Sans CJK SC", sans-serif; }
.swirl { position: absolute; bottom: 6px; left: 6px; }
.ghost { position: absolute; right: 0; bottom: 2px; color: #2272ea; font: 700 21px/24px "Noto Sans CJK SC", sans-serif; }
.ghost small { display: block; font: 700 14px/20px "Liberation Sans", sans-serif; }
.keys { position: absolute; right: 4px; bottom: 3px; display: flex; align-items: center; gap: 15px; }
</style>
